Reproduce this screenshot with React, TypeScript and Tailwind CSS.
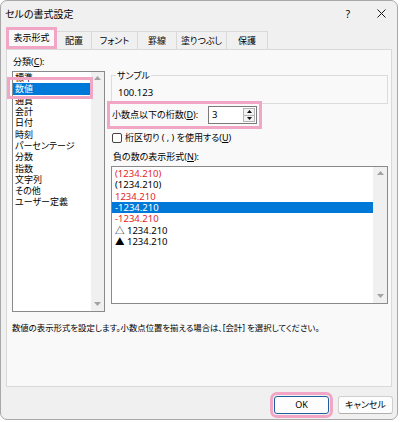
import React from "react";

const categories = ["標準", "数値", "通貨", "会計", "日付", "時刻", "パーセンテージ", "分数", "指数", "文字列", "その他", "ユーザー定義"];

type NegItem = { text: string; red?: boolean; selected?: boolean };

const negatives: NegItem[] = [
  { text: "(1234.210)", red: true },
  { text: "(1234.210)" },
  { text: "1234.210", red: true },
  { text: "-1234.210", selected: true },
  { text: "-1234.210", red: true },
  { text: "△ 1234.210" },
  { text: "▲ 1234.210" },
];

const tabs = [
  { label: "配置", w: "w-[35px]" },
  { label: "フォント", w: "w-[46px]" },
  { label: "罫線", w: "w-[39px]" },
  { label: "塗りつぶし", w: "w-[50px]" },
  { label: "保護", w: "w-[41px]" },
];

const ArrowUp = ({ color = "#a3a3a3" }: { color?: string }) => (
  <svg width="7" height="4" viewBox="0 0 7 4">
    <path d="M3.5 0L7 4H0z" fill={color} />
  </svg>
);

const ArrowDown = ({ color = "#a3a3a3" }: { color?: string }) => (
  <svg width="7" height="4" viewBox="0 0 7 4">
    <path d="M0 0h7L3.5 4z" fill={color} />
  </svg>
);

const Scrollbar = ({ width }: { width: string }) => (
  <div className={`${width} h-full bg-[#f0f0f0] flex flex-col items-center justify-between pt-[4px] pb-[5px]`}>
    <ArrowUp />
    <ArrowDown />
  </div>
);

export default function App() {
  return (
    <div className="w-[400px] h-[422px] bg-white text-black text-[9px] leading-[12px] font-['Noto_Sans','Noto_Sans_CJK_JP',sans-serif] [font-feature-settings:'palt']">
      <div className="w-[398px] h-[420px] bg-[#f0f0f0] border border-[#a8a8a8] rounded-[7px] overflow-hidden flex flex-col">
        {/* Title bar */}
        <div className="h-[25px] shrink-0 flex items-center pl-[4px] pr-[11px]">
          <span className="text-[10px]">セルの書式設定</span>
          <span className="ml-auto mr-[27px] text-[10px]">?</span>
          <svg width="9" height="9" viewBox="0 0 9 9">
            <path d="M0.5 0.5L8.5 8.5M8.5 0.5L0.5 8.5" stroke="#1a1a1a" strokeWidth="1" />
          </svg>
        </div>

        {/* Tabs */}
        <div className="h-[23px] shrink-0 flex items-end pl-[5px]">
          <div className="w-[51px] h-[22px] flex items-center justify-center bg-[#f9f9f9] outline-[3px] outline-[#f2a6c6] -outline-offset-[3px] relative z-10">
            表示形式
          </div>
          {tabs.map((t) => (
            <div key={t.label} className={`${t.w} h-[18px] flex items-center justify-center border-t border-r border-[#d9d9d9] bg-[#f0f0f0]`}>
              {t.label}
            </div>
          ))}
        </div>

        {/* Panel */}
        <div className="mx-[5px] h-[338px] shrink-0 bg-[#f9f9f9] border border-[#d9d9d9] pl-[5px] pt-[6px]">
          <div className="flex items-start">
            {/* Category column */}
            <div className="w-[93px]">
              <div className="h-[12px] flex items-center pl-[1px]">
                分類(<span className="underline">C</span>):
              </div>
              <div className="relative mt-[3px] h-[241px] bg-white border border-[#8a8a8a] flex">
                <div className="flex-1">
                  {categories.map((c) => (
                    <div key={c} className={`h-[11.3px] leading-[11px] flex items-center pl-[2px] ${c === "数値" ? "bg-[#0078d7] text-white" : ""}`}>
                      {c}
                    </div>
                  ))}
                </div>
                <Scrollbar width="w-[13px]" />
                <div className="absolute left-[-6px] top-[5px] w-[86px] h-[22px] border-[3px] border-[#f2a6c6]" />
              </div>
            </div>

            {/* Right column */}
            <div className="ml-[6px] w-[277px]">
              <fieldset className="mt-[13px] border border-[#dcdcdc] pb-[4px]">
                <legend className="ml-[4px] px-[1px] h-[13px] leading-[13px]">サンプル</legend>
                <div className="mt-[5px] h-[12px] flex items-center pl-[6px] text-[9.5px]">100.123</div>
              </fieldset>

              <div className="mt-[1px] w-[147px] h-[20px] flex items-center justify-between pl-[1px] pr-[1px] outline-[3px] outline-[#f2a6c6] outline-offset-[1px]">
                <span>
                  小数点以下の桁数(<span className="underline">D</span>):
                </span>
                <div className="w-[49px] h-[18px] bg-white border border-[#7a7a7a] flex">
                  <div className="flex-1 flex items-center pl-[3px] text-[9.5px]">3</div>
                  <div className="w-[14px] flex flex-col p-[1px]">
                    <div className="flex-1 bg-[#f3f3f3] border border-[#b5b5b5] flex items-center justify-center">
                      <svg width="5" height="3" viewBox="0 0 5 3">
                        <path d="M2.5 0L5 3H0z" fill="#111" />
                      </svg>
                    </div>
                    <div className="flex-1 bg-[#f3f3f3] border border-[#b5b5b5] border-t-0 flex items-center justify-center">
                      <svg width="5" height="3" viewBox="0 0 5 3">
                        <path d="M0 0h5L2.5 3z" fill="#111" />
                      </svg>
                    </div>
                  </div>
                </div>
              </div>

              <div className="mt-[7px] h-[12px] flex items-center pl-[1px]">
                <div className="w-[10px] h-[10px] bg-white border border-[#444] rounded-[2px]" />
                <span className="ml-[3px]">
                  桁区切り ( , ) を使用する(<span className="underline">U</span>)
                </span>
              </div>

              <div className="mt-[7px] h-[12px] flex items-center pl-[2px]">
                負の数の表示形式(<span className="underline">N</span>):
              </div>

              <div className="mt-[3px] h-[138px] bg-white border border-[#8a8a8a] flex">
                <div className="flex-1 pt-[1px] text-[9.5px]">
                  {negatives.map((n, i) => (
                    <div
                      key={i}
                      className={`h-[11.3px] leading-[11px] flex items-center pl-[3px] ${n.selected ? "bg-[#0078d7] text-white" : n.red ? "text-[#e4252b]" : ""}`}
                    >
                      {n.text}
                    </div>
                  ))}
                </div>
                <Scrollbar width="w-[14px]" />
              </div>
            </div>
          </div>

          <div className="mt-[10px] h-[12px] flex items-center text-[8.4px]">
            数値の表示形式を設定します。小数点位置を揃える場合は、[会計] を選択してください。
          </div>
        </div>

        {/* Buttons */}
        <div className="flex justify-end gap-[9px] pt-[9px] pr-[4px]">
          <button className="w-[55px] h-[18px] bg-[#fdfdfd] border border-[#1f5f9e] rounded-[3px] flex items-center justify-center outline-[3px] outline-[#f2a6c6] outline-offset-[1px]">
            OK
          </button>
          <button className="w-[55px] h-[18px] bg-[#fdfdfd] border border-[#cfcfcf] border-b-[#b0b0b0] rounded-[3px] flex items-center justify-center">
            キャンセル
          </button>
        </div>
      </div>
    </div>
  );
}
